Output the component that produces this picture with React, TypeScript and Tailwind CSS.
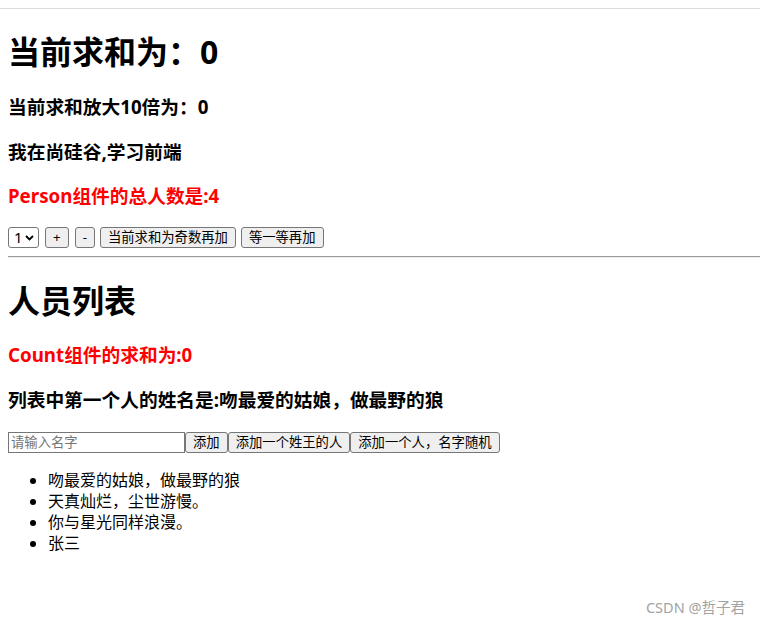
import React from 'react';

const persons = ['吻最爱的姑娘，做最野的狼', '天真灿烂，尘世游慢。', '你与星光同样浪漫。', '张三'];

const btn =
  'h-[21px] px-[7px] bg-[#efefef] border border-[#767676] rounded-[3px] text-[13.33px] leading-[19px] text-black whitespace-nowrap';

export default function App() {
  return (
    <div
      className="relative w-[760px] h-[625px] bg-white text-black overflow-hidden"
      style={{ fontFamily: '"Noto Sans", "Noto Sans CJK SC", sans-serif' }}
    >
      <div className="h-[8px]" />
      <div className="border-t border-[#dcdcdc]" />

      <div className="px-[8px] pt-[22px]">
        {/* Count 组件 */}
        <h1 className="text-[32px] leading-[42px] font-bold">当前求和为：0</h1>
        <h3 className="mt-[21px] text-[18.72px] leading-[25px] font-bold">当前求和放大10倍为：0</h3>
        <h3 className="mt-[19.5px] text-[18.72px] leading-[25px] font-bold">我在尚硅谷,学习前端</h3>
        <h3 className="mt-[19.5px] text-[18.72px] leading-[25px] font-bold text-[#ff0000]">
          Person组件的总人数是:4
        </h3>

        <div className="mt-[19px] flex items-center gap-[5px]">
          <div className="h-[21px] w-[31px] flex items-center justify-between pl-[5px] pr-[4px] border border-[#767676] rounded-[3px] bg-white text-[15px] leading-[19px]">
            <span>1</span>
            <svg width="9" height="6" viewBox="0 0 9 6" className="mt-[1px]">
              <path d="M1 1 L4.5 4.5 L8 1" fill="none" stroke="#000" strokeWidth="1.8" />
            </svg>
          </div>
          <button className={`${btn} ml-[1px]`}>+</button>
          <button className={`${btn} ml-[1px]`}>-</button>
          <button className={btn}>当前求和为奇数再加</button>
          <button className={btn}>等一等再加</button>
        </div>
      </div>

      <div className="ml-[8px] mt-[8px] border-t border-[#9a9a9a] border-b border-b-[#eeeeee]" />

      {/* Person 组件 */}
      <div className="px-[8px] pt-[22px]">
        <h1 className="text-[32px] leading-[42px] font-bold">人员列表</h1>
        <h3 className="mt-[20px] text-[18.72px] leading-[25px] font-bold text-[#ff0000]">Count组件的求和为:0</h3>
        <h3 className="mt-[20px] text-[18.72px] leading-[25px] font-bold">
          列表中第一个人的姓名是:吻最爱的姑娘，做最野的狼
        </h3>

        <div className="mt-[19.5px] flex items-center">
          <input
            placeholder="请输入名字"
            className="h-[21px] w-[177px] px-[2px] border border-[#767676] text-[13.33px] leading-[19px] placeholder:text-[#757575] outline-none"
          />
          <button className={btn}>添加</button>
          <button className={btn}>添加一个姓王的人</button>
          <button className={btn}>添加一个人，名字随机</button>
        </div>

        <ul className="mt-[17px] pl-[40px] list-disc text-[16px] leading-[21px]">
          {persons.map((p) => (
            <li key={p}>{p}</li>
          ))}
        </ul>
      </div>

      <div className="absolute right-[15px] top-[597px] text-[14.5px] leading-[20px] text-[#a3a3a3]">
        CSDN @哲子君
      </div>
    </div>
  );
}
